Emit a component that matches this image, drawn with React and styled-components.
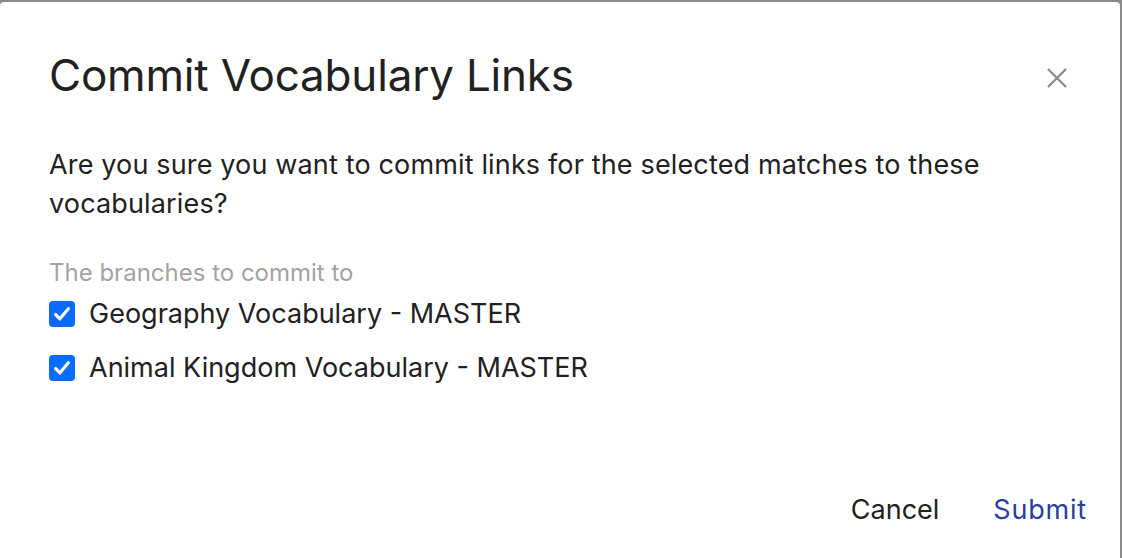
import React from "react";
import styled, { createGlobalStyle } from "styled-components";

const Global = createGlobalStyle`
  html, body { margin: 0; padding: 0; }
  body {
    background: #8a8a8a;
    font-family: Inter, "Helvetica Neue", Arial, sans-serif;
    overflow: hidden;
  }
`;

const Page = styled.div`
  width: 1122px;
  height: 558px;
  padding-top: 2px;
  box-sizing: border-box;
`;

const Dialog = styled.div`
  width: 1120px;
  height: 556px;
  background: #fff;
  border-radius: 4px 4px 0 0;
  display: flex;
  flex-direction: column;
  box-sizing: border-box;
  padding: 0 33px 0 49px;
`;

const Header = styled.div`
  display: flex;
  justify-content: space-between;
  align-items: flex-start;
  padding-top: 47px;
`;

const Title = styled.h2`
  margin: 0;
  font-size: 44px;
  font-weight: 400;
  line-height: 52px;
  color: #212121;
  letter-spacing: -0.2px;
`;

const Close = styled.button`
  border: 0;
  background: none;
  padding: 0;
  margin: 17px 18px 0 0;
  width: 24px;
  height: 24px;
  display: flex;
  align-items: center;
  justify-content: center;
  cursor: pointer;
`;

const Message = styled.p`
  margin: 44px 0 0;
  font-size: 27px;
  line-height: 39px;
  letter-spacing: 0.15px;
  color: #212121;
  max-width: 960px;
`;

const Legend = styled.div`
  margin-top: 35px;
  font-size: 24px;
  line-height: 30px;
  color: #a3a3a3;
`;

const Options = styled.div`
  display: flex;
  flex-direction: column;
  gap: 24px;
  margin-top: 11px;
`;

const Option = styled.label`
  display: flex;
  align-items: center;
  gap: 14px;
  font-size: 27px;
  line-height: 30px;
  color: #212121;
`;

const Box = styled.span`
  width: 26px;
  height: 26px;
  border-radius: 4px;
  background: #0a6cff;
  display: flex;
  align-items: center;
  justify-content: center;
  flex: none;
`;

const Footer = styled.div`
  display: flex;
  justify-content: flex-end;
  gap: 54px;
  margin-top: 111px;
`;

const TextButton = styled.button`
  border: 0;
  background: none;
  padding: 0;
  font-family: inherit;
  font-size: 27px;
  line-height: 32px;
  letter-spacing: ${(p) => (p.$primary ? "0.8px" : "0")};
  color: ${(p) => (p.$primary ? "#283f9e" : "#212121")};
  cursor: pointer;
`;

const Check = () => (
  <svg width="18" height="18" viewBox="0 0 17 17">
    <path d="M2.5 9 L6.5 13 L14.5 3.5" fill="none" stroke="#fff" strokeWidth="3" strokeLinecap="round" strokeLinejoin="round" />
  </svg>
);

export default function App() {
  const branches = ["Geography Vocabulary - MASTER", "Animal Kingdom Vocabulary - MASTER"];
  return (
    <Page>
      <Global />
      <Dialog>
        <Header>
          <Title>Commit Vocabulary Links</Title>
          <Close aria-label="Close">
            <svg width="20" height="20" viewBox="0 0 20 20">
              <path d="M1 1 L19 19 M19 1 L1 19" stroke="#8a8a8a" strokeWidth="2.2" />
            </svg>
          </Close>
        </Header>
        <Message>
          Are you sure you want to commit links for the selected matches to these vocabularies?
        </Message>
        <Legend>The branches to commit to</Legend>
        <Options>
          {branches.map((b) => (
            <Option key={b}>
              <Box>
                <Check />
              </Box>
              {b}
            </Option>
          ))}
        </Options>
        <Footer>
          <TextButton>Cancel</TextButton>
          <TextButton $primary>Submit</TextButton>
        </Footer>
      </Dialog>
    </Page>
  );
}
